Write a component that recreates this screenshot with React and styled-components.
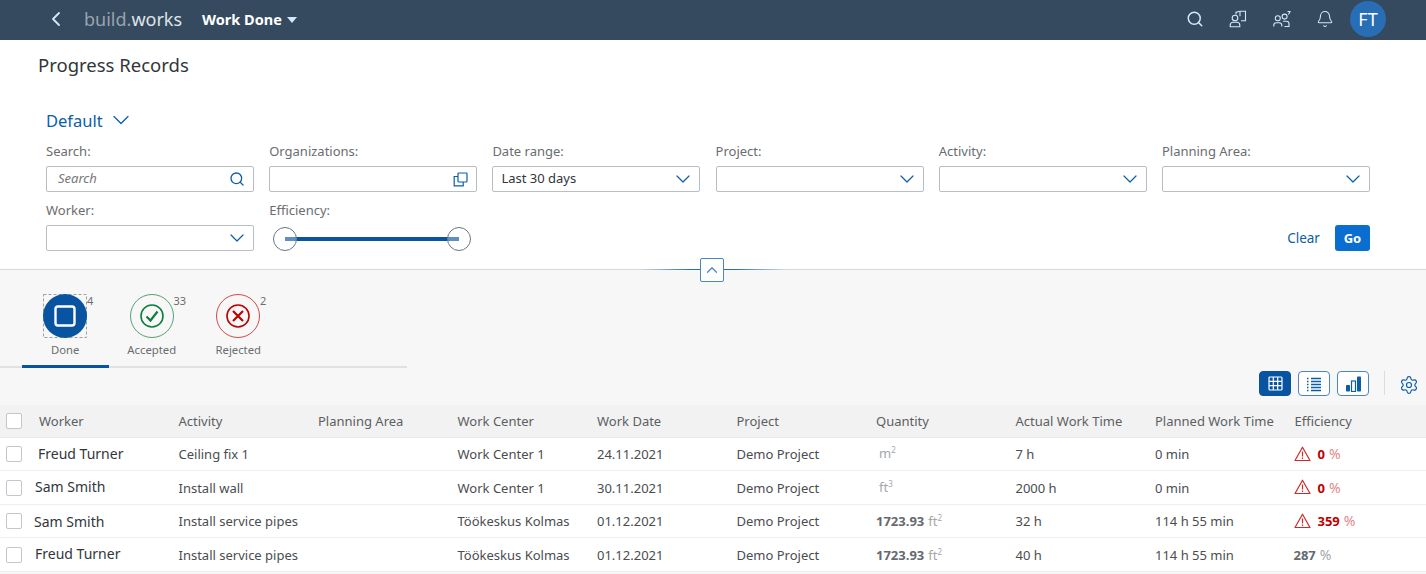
import React from "react";
import styled, { createGlobalStyle } from "styled-components";
import { ChevronLeft, ChevronDown, ChevronUp, Search, Bell, Settings } from "lucide-react";

const GlobalStyle = createGlobalStyle`
  html, body {
    margin: 0;
    padding: 0;
    background: #f7f7f7;
    font-family: "Noto Sans", "Open Sans", sans-serif;
    color: #32363a;
  }
`;

const Page = styled.div`
  width: 1426px;
  height: 574px;
  overflow: hidden;
`;

const Shell = styled.header`
  height: 40px;
  box-sizing: border-box;
  background: #354a5f;
  display: flex;
  align-items: center;
  padding: 0 40px 2px 44px;
`;

const BackButton = styled.span`
  display: flex;
  width: 24px;
  color: #d1e8ff;
  margin-right: 16px;
`;

const Logo = styled.span`
  font-size: 18px;
  font-weight: 400;
  color: #dfe4e8;
  width: 118px;
  span {
    color: #98a3ae;
  }
`;

const AppTitle = styled.span`
  font-size: 14.5px;
  font-weight: 700;
  color: #fff;
  display: flex;
  align-items: center;
  gap: 5px;
`;

const Caret = styled.i`
  width: 0;
  height: 0;
  margin-top: 1px;
  border-left: 5px solid transparent;
  border-right: 5px solid transparent;
  border-top: 6px solid #d1e8ff;
`;

const ShellActions = styled.div`
  margin-left: auto;
  display: flex;
  align-items: center;
  gap: 25.5px;
  color: #d1e8ff;
`;

const ShellIcon = styled.span`
  display: flex;
  width: 18px;
  justify-content: center;
`;

const Avatar = styled.span`
  width: 36px;
  height: 36px;
  margin-left: -9.5px;
  border-radius: 50%;
  background: #286eb4;
  color: #fff;
  font-size: 18px;
  display: flex;
  align-items: center;
  justify-content: center;
`;

const FilterPanel = styled.section`
  height: 230px;
  box-sizing: border-box;
  background: #fff;
  padding: 13px 56px 0 46px;
  position: relative;
  border-bottom: 1px solid #d9d9d9;
`;

const PageTitle = styled.h1`
  margin: 0 0 0 -8px;
  font-size: 18.5px;
  line-height: 24px;
  font-weight: 400;
`;

const Variant = styled.div`
  margin-top: 31px;
  height: 24px;
  display: flex;
  align-items: center;
  gap: 4px;
  font-size: 16.5px;
  color: #0a5ea8;
`;

const FilterGrid = styled.div`
  margin-top: 10px;
  display: grid;
  grid-template-columns: repeat(6, 208px);
  column-gap: 15.2px;
  row-gap: 9px;
`;

const Field = styled.div`
  display: flex;
  flex-direction: column;
  gap: 6px;
`;

const Label = styled.label`
  font-size: 13px;
  line-height: 18px;
  color: #6a6d70;
`;

const InputBox = styled.div`
  height: 26px;
  box-sizing: border-box;
  border: 1px solid #b8bec4;
  border-radius: 2px;
  background: #fff;
  display: flex;
  align-items: center;
  justify-content: space-between;
  padding: 0 8px 0 ${(p) => (p.$italic ? "11px" : "8px")};
  font-size: 13px;
  color: ${(p) => (p.$italic ? "#74777a" : "#32363a")};
  font-style: ${(p) => (p.$italic ? "italic" : "normal")};
  span {
    margin-top: -2px;
  }
  svg {
    color: #0a5ea8;
    flex-shrink: 0;
  }
`;

const DropArrow = styled(ChevronDown)`
  margin-right: -4px;
`;

const Slider = styled.div`
  position: relative;
  height: 26px;
  width: 198px;
  margin-left: 4px;
`;

const SliderTrack = styled.div`
  position: absolute;
  left: 12px;
  right: 12px;
  top: 12px;
  height: 4px;
  background: #0854a0;
`;

const SliderHandle = styled.span`
  position: absolute;
  top: 2px;
  ${(p) => (p.$end ? "right: 0;" : "left: 0;")}
  width: 24px;
  height: 24px;
  box-sizing: border-box;
  border-radius: 50%;
  border: 1.5px solid #6a7681;
  background: rgba(255, 255, 255, 0.35);
`;

const FilterActions = styled.div`
  grid-column: 6;
  align-self: end;
  height: 26px;
  display: flex;
  justify-content: flex-end;
  align-items: center;
  gap: 15px;
`;

const ClearButton = styled.span`
  font-size: 13.5px;
  color: #0a5ea8;
`;

const GoButton = styled.span`
  width: 35px;
  height: 26px;
  border-radius: 3px;
  background: #0a6ed1;
  color: #fff;
  font-size: 13px;
  font-weight: 700;
  display: flex;
  align-items: center;
  justify-content: center;
`;

const CollapseLine = styled.div`
  position: absolute;
  left: 640px;
  width: 146px;
  bottom: -1px;
  height: 1px;
  background: linear-gradient(90deg, transparent, #2a6eb0 35%, #2a6eb0 65%, transparent);
`;

const CollapseButton = styled.span`
  position: absolute;
  left: 700px;
  bottom: -13px;
  width: 24px;
  height: 24px;
  box-sizing: border-box;
  border: 1px solid #4a86c0;
  border-radius: 2px;
  background: #fff;
  color: #4a86c0;
  display: flex;
  align-items: center;
  justify-content: center;
  z-index: 1;
`;

const TabBar = styled.nav`
  margin-top: 24px;
  width: 407px;
  padding-left: 22px;
  box-sizing: border-box;
  display: flex;
  height: 74px;
  border-bottom: 2px solid #e1e1e1;
`;

const Tab = styled.div`
  width: 86.5px;
  height: 74px;
  display: flex;
  flex-direction: column;
  align-items: center;
  position: relative;
  flex-shrink: 0;
  box-sizing: border-box;
  border-bottom: 3px solid ${(p) => (p.$active ? "#0854a0" : "transparent")};
`;

const TabIcon = styled.span`
  display: flex;
  width: 44px;
  height: 44px;
`;

const TabCount = styled.span`
  position: absolute;
  top: 0;
  left: ${(p) => p.$left}px;
  font-size: 11px;
  line-height: 14px;
  color: #6a6d70;
`;

const TabLabel = styled.span`
  margin-top: 5px;
  font-size: 11.3px;
  line-height: 14px;
  color: #6a6d70;
`;

const TableToolbar = styled.div`
  height: 37px;
  box-sizing: border-box;
  padding: 3px 7px 0 0;
  display: flex;
  justify-content: flex-end;
  align-items: flex-start;
  gap: 7px;
`;

const ViewButton = styled.span`
  width: 32px;
  height: 25px;
  box-sizing: border-box;
  border-radius: 4px;
  border: 1px solid ${(p) => (p.$active ? "#0854a0" : "#4a86c0")};
  background: ${(p) => (p.$active ? "#0854a0" : "#fff")};
  color: ${(p) => (p.$active ? "#fff" : "#0a5ea8")};
  display: flex;
  align-items: center;
  justify-content: center;
`;

const ToolbarSeparator = styled.span`
  width: 1px;
  height: 24px;
  background: #dcdcdc;
  margin: 0 7px 0 8px;
`;

const SettingsButton = styled.span`
  display: flex;
  color: #0a5ea8;
  margin-top: 4px;
`;

const Row = styled.div`
  display: grid;
  grid-template-columns: 33px repeat(10, 139.5px);
  align-items: center;
  box-sizing: border-box;
  padding-left: 6px;
  height: ${(p) => p.$height}px;
  font-size: 13px;
  background: ${(p) => (p.$head ? "#f2f2f2" : "#fff")};
  border-bottom: 1px solid ${(p) => (p.$head ? "#e8e8e8" : "#eeeeee")};
  color: ${(p) => (p.$head ? "#5c5f62" : "#4a4d50")};
`;

const Checkbox = styled.span`
  width: 16px;
  height: 16px;
  box-sizing: border-box;
  border: 1px solid #c2c7cc;
  border-radius: 2px;
  background: #fff;
`;

const WorkerName = styled.span`
  font-size: 14px;
  color: #32363a;
  margin-left: ${(p) => p.$x}px;
  margin-top: ${(p) => p.$y}px;
`;

const Quantity = styled.span`
  font-weight: 700;
  color: #666a6e;
  small {
    font-size: 13px;
    font-weight: 400;
    color: #a4a7aa;
    margin-left: 4px;
  }
  sup {
    font-size: 8px;
    line-height: 0;
  }
`;

const UnitOnly = styled.span`
  color: #a4a7aa;
  margin-left: 3px;
  margin-top: -2px;
  sup {
    font-size: 8px;
    line-height: 0;
  }
`;

const EfficiencyCell = styled.span`
  display: flex;
  align-items: center;
  gap: 7px;
  margin-left: -1px;
  margin-top: -1px;
  font-weight: 700;
  color: ${(p) => (p.$bad ? "#bb0000" : "#666a6e")};
  small {
    font-size: 14px;
    font-weight: 400;
    margin-left: 4px;
    color: ${(p) => (p.$bad ? "#e08a8a" : "#a4a7aa")};
  }
`;

const PersonBookIcon = () => (
  <svg width="18" height="18" viewBox="0 0 18 18" fill="none" stroke="currentColor" strokeWidth="1.1">
    <path d="M7 4.500V2.200l4-.9 5.500 0v9.500H12" />
    <path d="M11 1.300v5" />
    <circle cx="6" cy="8" r="2.800" />
    <path d="M1.200 16.800v-1.600c0-1.900 1.600-3 3-3h3.600c1.400 0 3 1.100 3 3v1.600z" />
  </svg>
);

const PeopleIcon = () => (
  <svg width="18" height="18" viewBox="0 0 18 18" fill="none" stroke="currentColor" strokeWidth="1.1">
    <circle cx="4.800" cy="8.200" r="2.500" />
    <circle cx="11.600" cy="6.600" r="2.500" />
    <path d="M.8 16.500v-1.200c0-1.600 1.300-2.600 2.600-2.600h2.800c1.300 0 2.600 1 2.600 2.600v1.200" />
    <path d="M10 11.200h3.400c1.300 0 2.600 1 2.600 2.600v2.700h-4.500" />
    <path d="M14.500 1.500h2.500l-1.500 3" />
  </svg>
);

const DoneIcon = () => (
  <svg width="44" height="44" viewBox="0 0 44 44" fill="none">
    <rect x="0.5" y="0.5" width="43" height="43" stroke="#8a8a8a" strokeDasharray="3 2" strokeWidth="0.8" />
    <circle cx="22" cy="22" r="22" fill="#0854a0" />
    <rect x="12.500" y="12.500" width="19" height="19" rx="2.500" stroke="#fff" strokeWidth="2.400" />
  </svg>
);

const AcceptedIcon = () => (
  <svg width="44" height="44" viewBox="0 0 44 44" fill="none" stroke="#107e3e">
    <circle cx="22" cy="22" r="21.500" strokeWidth="0.7" />
    <circle cx="22" cy="22" r="11" strokeWidth="1.600" />
    <path d="M16.500 22.500l4 4 7-9" strokeWidth="2.200" />
  </svg>
);

const RejectedIcon = () => (
  <svg width="44" height="44" viewBox="0 0 44 44" fill="none" stroke="#bb0000">
    <circle cx="22" cy="22" r="21.500" strokeWidth="0.7" />
    <circle cx="22" cy="22" r="11" strokeWidth="1.600" />
    <path d="M17 17l10 10M27 17L17 27" strokeWidth="2.200" />
  </svg>
);

const ValueHelpIcon = () => (
  <svg width="15" height="15" viewBox="0 0 15 15" fill="none" stroke="currentColor" strokeWidth="1.2">
    <rect x="5" y="1" width="9" height="9" rx="0.8" />
    <path d="M5 4.500H1.200v9.300h9V10" />
  </svg>
);

const GridIcon = () => (
  <svg width="15" height="15" viewBox="0 0 15 15" fill="none" stroke="currentColor" strokeWidth="1.2">
    <rect x="1" y="1" width="13" height="13" rx="1" />
    <path d="M5.300 1v13M9.700 1v13M1 5.300h13M1 9.700h13" />
  </svg>
);

const ListIcon = () => (
  <svg width="16" height="16" viewBox="0 0 16 16" fill="none" stroke="currentColor" strokeWidth="1.3">
    <path d="M1 2.500h2M1 5.500h2M1 8.500h2M1 11.500h2M1 14.500h2" strokeDasharray="1.5 0.5" />
    <path d="M5 2.500h10M5 5.500h10M5 8.500h10M5 11.500h10M5 14.500h10" />
  </svg>
);

const BarsIcon = () => (
  <svg width="17" height="16" viewBox="0 0 17 16" fill="currentColor">
    <rect x="1" y="9" width="4" height="6.500" rx="0.8" />
    <rect x="6.500" y="5" width="4" height="10.500" fill="none" stroke="currentColor" strokeWidth="1.200" />
    <rect x="12" y="0.500" width="4" height="15" rx="0.8" />
  </svg>
);

const WarningIcon = () => (
  <svg width="17" height="16" viewBox="0 0 17 16" fill="none" stroke="#cf2a2a" strokeWidth="1.2">
    <path d="M8.500 1.200L16 14.500H1z" strokeLinejoin="round" />
    <path d="M8.500 5.500v5M8.500 11.500v1.500" />
  </svg>
);

const filters = [
  { label: "Search:", value: "Search", italic: true, icon: <Search size={16} /> },
  { label: "Organizations:", icon: <ValueHelpIcon /> },
  { label: "Date range:", value: "Last 30 days" },
  { label: "Project:" },
  { label: "Activity:" },
  { label: "Planning Area:" },
  { label: "Worker:" },
];

const tabs = [
  { label: "Done", count: 4, countLeft: 65, icon: <DoneIcon />, active: true },
  { label: "Accepted", count: 33, countLeft: 65, icon: <AcceptedIcon /> },
  { label: "Rejected", count: 2, countLeft: 65, icon: <RejectedIcon /> },
];

const columns = [
  "Worker",
  "Activity",
  "Planning Area",
  "Work Center",
  "Work Date",
  "Project",
  "Quantity",
  "Actual Work Time",
  "Planned Work Time",
  "Efficiency",
];

const rows = [
  {
    worker: "Freud Turner",
    x: -1,
    y: -2,
    activity: "Ceiling fix 1",
    center: "Work Center 1",
    date: "24.11.2021",
    unit: "m",
    power: 2,
    actual: "7 h",
    planned: "0 min",
    efficiency: 0,
    bad: true,
    height: 33,
  },
  {
    worker: "Sam Smith",
    x: -4,
    y: -3,
    activity: "Install wall",
    center: "Work Center 1",
    date: "30.11.2021",
    unit: "ft",
    power: 3,
    actual: "2000 h",
    planned: "0 min",
    efficiency: 0,
    bad: true,
    height: 34,
  },
  {
    worker: "Sam Smith",
    x: -5,
    y: 0,
    activity: "Install service pipes",
    center: "Töökeskus Kolmas",
    date: "01.12.2021",
    qty: "1723.93",
    unit: "ft",
    power: 2,
    actual: "32 h",
    planned: "114 h 55 min",
    efficiency: 359,
    bad: true,
    height: 33,
  },
  {
    worker: "Freud Turner",
    x: -4,
    y: -2,
    activity: "Install service pipes",
    center: "Töökeskus Kolmas",
    date: "01.12.2021",
    qty: "1723.93",
    unit: "ft",
    power: 2,
    actual: "40 h",
    planned: "114 h 55 min",
    efficiency: 287,
    height: 34,
  },
];

export default function App() {
  return (
    <Page>
      <GlobalStyle />
      <Shell>
        <BackButton>
          <ChevronLeft size={24} strokeWidth={1.8} />
        </BackButton>
        <Logo>
          <span>build.</span>works
        </Logo>
        <AppTitle>
          Work Done <Caret />
        </AppTitle>
        <ShellActions>
          <ShellIcon>
            <Search size={18} />
          </ShellIcon>
          <ShellIcon>
            <PersonBookIcon />
          </ShellIcon>
          <ShellIcon>
            <PeopleIcon />
          </ShellIcon>
          <ShellIcon>
            <Bell size={20} strokeWidth={1.4} />
          </ShellIcon>
          <Avatar>FT</Avatar>
        </ShellActions>
      </Shell>

      <FilterPanel>
        <PageTitle>Progress Records</PageTitle>
        <Variant>
          Default <ChevronDown size={28} strokeWidth={1.1} />
        </Variant>
        <FilterGrid>
          {filters.map((f) => (
            <Field key={f.label}>
              <Label>{f.label}</Label>
              <InputBox $italic={f.italic}>
                <span>{f.value}</span>
                {f.icon || <DropArrow size={24} strokeWidth={1.2} />}
              </InputBox>
            </Field>
          ))}
          <Field>
            <Label>Efficiency:</Label>
            <Slider>
              <SliderTrack />
              <SliderHandle />
              <SliderHandle $end />
            </Slider>
          </Field>
          <FilterActions>
            <ClearButton>Clear</ClearButton>
            <GoButton>Go</GoButton>
          </FilterActions>
        </FilterGrid>
        <CollapseLine />
        <CollapseButton>
          <ChevronUp size={18} strokeWidth={1.6} />
        </CollapseButton>
      </FilterPanel>

      <TabBar>
        {tabs.map((t) => (
          <Tab key={t.label} $active={t.active}>
            <TabIcon>{t.icon}</TabIcon>
            <TabCount $left={t.countLeft}>{t.count}</TabCount>
            <TabLabel>{t.label}</TabLabel>
          </Tab>
        ))}
      </TabBar>

      <TableToolbar>
        <ViewButton $active>
          <GridIcon />
        </ViewButton>
        <ViewButton>
          <ListIcon />
        </ViewButton>
        <ViewButton>
          <BarsIcon />
        </ViewButton>
        <ToolbarSeparator />
        <SettingsButton>
          <Settings size={20} strokeWidth={1.4} />
        </SettingsButton>
      </TableToolbar>

      <Row $head $height={33}>
        <Checkbox />
        {columns.map((c) => (
          <span key={c}>{c}</span>
        ))}
      </Row>
      {rows.map((r) => (
        <Row key={r.worker + r.date + r.actual} $height={r.height}>
          <Checkbox />
          <WorkerName $x={r.x} $y={r.y}>
            {r.worker}
          </WorkerName>
          <span>{r.activity}</span>
          <span />
          <span>{r.center}</span>
          <span>{r.date}</span>
          <span>Demo Project</span>
          {r.qty ? (
            <Quantity>
              {r.qty}
              <small>
                {r.unit}
                <sup>{r.power}</sup>
              </small>
            </Quantity>
          ) : (
            <UnitOnly>
              {r.unit}
              <sup>{r.power}</sup>
            </UnitOnly>
          )}
          <span>{r.actual}</span>
          <span>{r.planned}</span>
          <EfficiencyCell $bad={r.bad}>
            {r.bad && <WarningIcon />}
            <span>
              {r.efficiency}
              <small>%</small>
            </span>
          </EfficiencyCell>
        </Row>
      ))}
    </Page>
  );
}
